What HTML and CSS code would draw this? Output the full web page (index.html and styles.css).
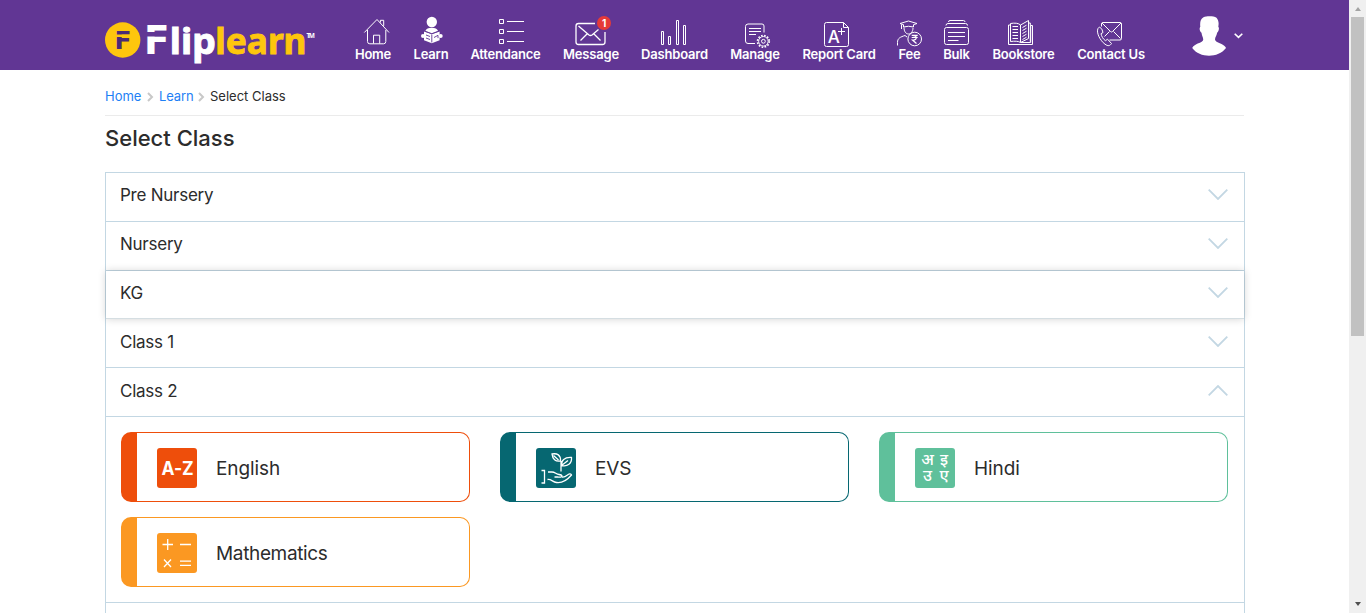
FILE: index.html
```html
<!DOCTYPE html>
<html lang="en">
<head>
<meta charset="utf-8">
<title>Fliplearn - Select Class</title>
<link rel="stylesheet" href="styles.css">
</head>
<body>
<div class="page">
<header class="header">
  <svg class="logo" viewBox="105 14 212 50" role="img" aria-label="Fliplearn">
    <circle cx="122.7" cy="40" r="17.7" fill="#fec60d"/>
    <text class="logo-f" x="114.5" y="49" font-size="25.5" textLength="17" lengthAdjust="spacingAndGlyphs" fill="#4b2a75">F</text>
    <path d="M113 34.5h20v2.5h-20z" fill="#fec60d"/>
    <text class="logo-f" x="144" y="54" font-size="38.5" textLength="25.5" lengthAdjust="spacingAndGlyphs" fill="#fff">F</text>
    <path d="M145 32h24v4.5h-24z" fill="#613694"/>
    <text class="logo-word" x="169.8" y="53.700" font-size="36" textLength="46" lengthAdjust="spacingAndGlyphs" fill="#fff" stroke="#fff">lip</text>
    <text class="logo-word" x="215.300" y="53.700" font-size="36" textLength="91.200" lengthAdjust="spacingAndGlyphs" fill="#fec60d" stroke="#fec60d">learn</text>
    <text class="logo-tm" x="306.600" y="37.500" font-size="6.500" textLength="8.200" fill="#fff">TM</text>
  </svg>
  <nav class="nav">
    <a class="nav-item"><svg class="ico" viewBox="354 14 38 34"><path d="M364.3 32.5 377 19.5l12 13M367.5 30v11.5q0 2.3 2.3 2.3h13.7q2.3 0 2.3-2.3V30M373.5 43.5v-8.3h6.2v8.3M380.4 22.5v-2.2h3.3v5.6"/></svg><span>Home</span></a>
    <a class="nav-item"><svg class="ico" viewBox="414 14 34 34"><circle cx="431.8" cy="22" r="5.2" class="fill"/><path class="fill" d="M425.3 31c1-2.5 3-3.2 6.4-3.2s5.400.7 6.400 3.200l-6.400 2.400z"/><path class="fill" d="M424 31.500l7.800 2.700 7.800-2.700v8.700l-7.800 3-7.800-3z"/><circle cx="423" cy="36" r="2" class="fill"/><circle cx="440.700" cy="36" r="2" class="fill"/><path class="dark" d="M431.800 34.500v8M426 35l4 1.500M426 38l4 1.500M434 37.500l4-2.200v2.800M424.500 31l7.300 2.700 7.300-2.700"/></svg><span>Learn</span></a>
    <a class="nav-item"><svg class="ico" viewBox="470 14 71 34"><path d="M499.500 19.500h4v4h-4zM499.500 29.500h4v4h-4zM499.500 39.500h4v4h-4zM507 21.500h17M507 31.500h17M507 41.500h17"/></svg><span>Attendance</span></a>
    <a class="nav-item"><svg class="ico" viewBox="563 14 56 34"><path class="mid" d="M595 23.500h-16.500q-2.500 0-2.500 2.500v16q0 2.500 2.500 2.500h24q2.500 0 2.500-2.500V32M578.500 26l10.500 9q1.500 1 3 0l6.500-5.500M580.500 40.500l6.500-6.500M594 34l6.500 6.500"/><circle cx="604" cy="23" r="7" fill="#e53a38" stroke="none"/><text x="604" y="27" class="count">1</text></svg><span>Message</span></a>
    <a class="nav-item"><svg class="ico" viewBox="641 14 67 34"><path d="M661.500 31.500h2v13h-2zM668.500 36.500h2v8h-2zM676.500 20.500h2v24h-2zM683.500 25.500h2v19h-2z"/></svg><span>Dashboard</span></a>
    <a class="nav-item"><svg class="ico" viewBox="730 14 50 34"><path d="M755 43.500h-7q-2.500 0-2.500-2.500V26.500q0-2.500 2.500-2.500h14q2 0 2 2v6.500M749 28.500h12M749 31.500h12M749 34.500h7"/><circle cx="763.400" cy="41.300" r="4.800"/><circle cx="763.400" cy="41.300" r="1.900"/><circle cx="763.400" cy="41.300" r="5.900" stroke-width="1.600" stroke-dasharray="1.600 1.490"/></svg><span>Manage</span></a>
    <a class="nav-item"><svg class="ico" viewBox="802 14 74 34"><path d="M843.500 22.500h-17q-2 0-2 2v20q0 2 2 2h20q2 0 2-2v-17zv5h5M841.500 28v7M838 31.500h7"/><text x="827.700" y="43" class="grade">A</text></svg><span>Report Card</span></a>
    <a class="nav-item"><svg class="ico" viewBox="898 14 23 34"><path d="M900 23.500l8.500-2.500 8.500 2.500-3.500 1.200v2.300q-5-1.500-10 0v-2.300zM901.500 24.500v4.500M904 27.500c0 4 2 6.500 4.500 6.500s4.500-2.500 4.500-6M897.500 45.500v-3c0-4.500 3-5.500 7.500-7l2 1.500"/><circle cx="914.700" cy="39" r="6.800"/><path d="M911.700 35.300h6M911.700 37.500h6M912.500 35.300c5 0 5 4.700 0 4.700l4 3.500" stroke-width="1.200"/></svg><span>Fee</span></a>
    <a class="nav-item"><svg class="ico" viewBox="943 14 27 34"><path d="M947 27.500h19.500q2 0 2 2v13q0 2-2 2H946.500q-2 0-2-2v-13q0-2 2-2zM946 25.500q0-2 2-2h17.500q2 0 2 2M948.500 22q0-1.500 1.500-1.500h13.500q1.500 0 1.500 1.500M948 32.500h17M948 36.500h17M948 40.500h10.500"/></svg><span>Bulk</span></a>
    <a class="nav-item"><svg class="ico" viewBox="992 14 63 34"><path d="M1020.500 42.500c-2-1.500-6-1.500-10-1V23.500c4-.7 8-.5 10 1.500zl8-4V20.500l-8 4.500M1010 25h-1.500v19.500h24V25.500h-1.800v17h-10M1028.500 23h1.800v19M1012.500 26.500h5.500M1012.500 29.500h5.500M1012.500 32.500h5.500M1012.500 35.500h5.500M1012.500 38.500h5.500M1022.500 27.500l4-2.300M1022.500 30.500l4-2.300M1022.500 33.500l4-2.300M1022.500 36.500l4-2.300M1022.500 39.500l4-2.300"/></svg><span>Bookstore</span></a>
    <a class="nav-item"><svg class="ico" viewBox="1077 14 68 34"><path d="M1101.500 26.500V24q0-1.500 1.500-1.500h17q1.500 0 1.500 1.500v14.500q0 1.500-1.500 1.500h-10.500M1102 23l8.500 8.500q1 1 2 0L1121 23M1104.500 36.500l5-5M1113.500 31.500l7 7M1099.500 27l-1.500 1.500c-2 4 2 12 7 15.700 3 2.200 5 1.800 6.500-.7l-4-4.300-2 1.500c-2.500-1.500-4-4.500-4.500-7l2-1.200q-.5-4-3.500-5.500z"/></svg><span>Contact Us</span></a>
  </nav>
  <svg class="avatar" viewBox="1192 16 52 40"><path class="fill" d="M1203.500 17.300c3-1.500 10-1.500 13 .4 2.500 3 2.300 6 1.800 9 1.400 1.500.2 5-1.200 6-.5 3-1.800 4-2.100 6.500 0 2.500 3.500 3.200 6.500 4.800 2.500 1.500 4 2.500 4.500 4-8 10.300-26 10.300-33.800 0 1-2 3-3.300 5.500-4.500 3.500-1.500 5.800-2 5.500-4.500-.3-2.500-1.300-3-1.700-6.300-1.800-1-2.500-4.500-1.200-6-.5-4 .2-8 3.200-9.400z"/><path d="M1234.700 33.700l3.800 3.700 3.800-3.700" fill="none" stroke="#fff" stroke-width="1.600"/></svg>
</header>
<main class="main">
  <div class="crumbs"><a class="crumb-home">Home</a><svg class="sep" viewBox="0 0 7 10"><path d="M1 1l4 4-4 4"/></svg><a class="crumb-learn">Learn</a><svg class="sep" viewBox="0 0 7 10"><path d="M1 1l4 4-4 4"/></svg><span class="crumb-current">Select Class</span></div>
  <h1 class="title">Select Class</h1>
  <section class="classes">
    <div class="row"><span>Pre Nursery</span><svg class="chev" viewBox="0 0 20 11"><path d="M.7.700 10 10 19.300.7"/></svg></div>
    <div class="row"><span>Nursery</span><svg class="chev" viewBox="0 0 20 11"><path d="M.7.700 10 10 19.300.7"/></svg></div>
    <div class="row row-hover"><span>KG</span><svg class="chev" viewBox="0 0 20 11"><path d="M.7.700 10 10 19.300.7"/></svg></div>
    <div class="row row-after"><span>Class 1</span><svg class="chev" viewBox="0 0 20 11"><path d="M.7.700 10 10 19.300.7"/></svg></div>
    <div class="row row-after"><span>Class 2</span><svg class="chev" viewBox="0 0 20 11"><path d="M.7 10.300 10 1l9.300 9.300"/></svg></div>
    <div class="subjects">
      <a class="card english"><svg class="tile" viewBox="0 0 40 40"><text x="4.500" y="27" class="az" textLength="32" lengthAdjust="spacingAndGlyphs">A-Z</text></svg><span>English</span></a>
      <a class="card evs"><svg class="tile" viewBox="0 0 40 40"><path d="M25 23.500V13M24.500 13c-5 1-8-2-8.500-7 5-1 9 1 8.500 7zM17.500 7.500l5 4.500M25.500 17.500c-.5-5 3-8.500 10-8 .5 6-4 9.500-10 8zl6.500-5M5.500 22.500h3v12.500H5.500M12 24h4c3 0 4 2 7 2.500 2 .3 3 .5 3 1.500s-2 1.500-4.500 1h-3M11.500 31.500c4-.5 5 2.500 9 3 7 1 12-4 15-7.500-.5-2-3-1-4 0-2 1.500-3.500 2.500-5.500 2"/></svg><span>EVS</span></a>
      <a class="card hindi"><svg class="tile" viewBox="0 0 40 40" lang="hi"><text x="12.500" y="16.500" class="deva">अ</text><text x="29" y="16.500" class="deva">इ</text><text x="12.500" y="33" class="deva">उ</text><text x="29" y="33" class="deva">ए</text></svg><span>Hindi</span></a>
      <a class="card maths"><svg class="tile" viewBox="0 0 40 40"><path d="M5.500 11.500h10.500M10.700 6v11M23 11.500h11M7 26.500l7 7.500M14 26.500 7 34M23 28.200h11M23 32.300h11"/></svg><span>Mathematics</span></a>
    </div>
  </section>
</main>
</div>
<aside class="scrollbar"><i class="up"></i><i class="thumb"></i><i class="down"></i></aside>
</body>
</html>
```
FILE: styles.css
```css
* { box-sizing: border-box; }
body { margin: 0; height: 613px; overflow: hidden; display: grid; grid-template-columns: 1349px 17px; background: #fff; color: #2c2c2c; font-family: "Inter", "Liberation Sans", sans-serif; }
.page { height: 613px; overflow: hidden; }
.header { height: 70px; background: #613694; display: flex; padding-left: 105px; }
.logo { width: 212px; height: 50px; margin-top: 14px; flex: none; }
.logo-f { font-family: "DejaVu Sans", sans-serif; font-weight: 700; }
.logo-word { font-family: "Noto Sans", sans-serif; font-weight: 700; stroke-width: .9; }
.logo-tm { font-family: "Noto Sans", sans-serif; font-weight: 700; }
.nav { margin: 14px 0 0 37px; display: grid; grid-template-columns: 38px 34px 71px 56px 67px 50px 74px 23px 27px 63px 68px; gap: 22px; flex: none; }
.nav-item { display: flex; flex-direction: column; align-items: center; color: #fff; font-size: 13px; font-weight: 600; line-height: 12px; letter-spacing: -0.2px; white-space: nowrap; }
.ico { width: 100%; height: 34px; flex: none; overflow: visible; fill: none; stroke: #fff; stroke-width: 1; }
.ico .mid { stroke-width: 1.3; }
.fill { fill: #fff; stroke: none; }
.ico .dark { stroke: #613694; stroke-width: .9; }
.count { fill: #fff; stroke: none; font-size: 10px; font-weight: 700; text-anchor: middle; }
.grade { fill: #fff; stroke: none; font-size: 17px; font-weight: 500; }
.avatar { width: 52px; height: 40px; margin: 16px 0 0 47px; flex: none; }
.main { width: 1140px; margin-left: 105px; }
.crumbs { height: 46px; padding-top: 17px; width: 1139px; border-bottom: 1px solid #ebebeb; display: flex; align-items: flex-start; font-size: 13px; line-height: 18px; }
.crumbs a { color: #1e80f5; }
.crumb-home { width: 37px; }
.crumb-learn { width: 34px; letter-spacing: -0.1px; }
.sep { width: 7px; height: 10px; margin: 5px 5px 0; fill: none; stroke: #c8c8c8; stroke-width: 2; }
.title { margin: 0; height: 56px; padding-top: 8px; font-size: 22px; line-height: 28px; font-weight: 500; }
.classes { border: 1px solid #c3d7e3; border-bottom: 0; height: 500px; }
.row { height: 49px; padding: 0 16px 0 14px; border-bottom: 1px solid #c3d7e3; display: flex; justify-content: space-between; font-size: 17px; line-height: 44px; letter-spacing: -0.25px; }
.chev { width: 20px; height: 11px; margin-top: 16px; fill: none; stroke: #c3d7e3; stroke-width: 1.8; }
.row-hover { height: 48px; border-bottom-color: #d5dee2; box-shadow: 0 0 8px rgba(0,0,0,.18); }
.row-after { line-height: 46px; }
.row-after .chev { margin-top: 17px; }
.subjects { padding: 15px; display: grid; grid-template-columns: repeat(3, 349px); gap: 15px 30px; border-bottom: 1px solid #c3d7e3; }
.card { height: 70px; border: 1px solid; border-left-width: 16px; border-radius: 10px; padding: 2px 0 0 20px; display: flex; align-items: center; gap: 19px; font-size: 19px; letter-spacing: -0.1px; }
.card span { color: #2c2c2c; }
.tile { width: 40px; height: 40px; border-radius: 3px; background: currentColor; fill: none; stroke: #fff; stroke-width: 1.3; }
.tile text { fill: #fff; stroke: none; }
.az { font-size: 19px; font-weight: 700; }
.deva { font-family: "Noto Sans", "Noto Sans Devanagari", sans-serif; font-size: 16px; font-weight: 500; text-anchor: middle; }
.english { color: #ee4e0b; }
.evs { color: #066771; }
.hindi { color: #5fc09b; }
.maths { color: #fb9822; }
.maths span { letter-spacing: -0.35px; }
.scrollbar { height: 613px; background: #f0f0f0; display: flex; flex-direction: column; align-items: center; }
.scrollbar i { flex: none; }
.up { width: 0; border: 3.5px solid transparent; border-top: 0; border-bottom: 4px solid #a3a3a3; margin: 7px 0 6px; }
.thumb { width: 13px; height: 319px; background: #c1c1c1; }
.down { width: 0; border: 3.5px solid transparent; border-bottom: 0; border-top: 4px solid #505050; margin-top: auto; margin-bottom: 7px; }
```
